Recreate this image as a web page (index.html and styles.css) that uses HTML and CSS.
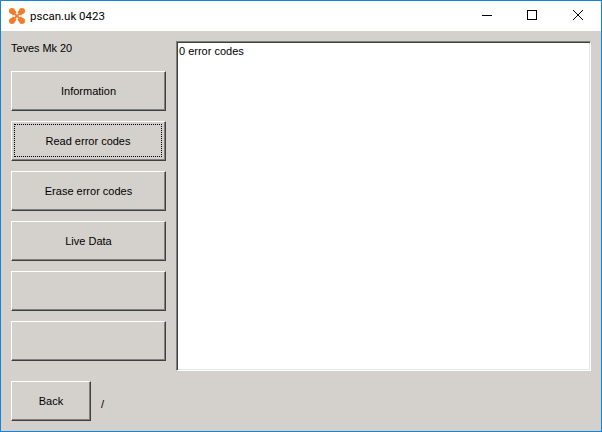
FILE: index.html
```html
<!DOCTYPE html>
<html lang="en">
<head>
<meta charset="utf-8">
<title>pscan.uk 0423</title>
<link rel="stylesheet" href="styles.css">
</head>
<body>
<div class="window">
  <header class="titlebar">
    <svg class="app-icon" width="16" height="16" viewBox="0 0 16 16">
      <path d="M3.5 3.5L12.5 12.5M12.5 3.5L3.5 12.5" fill="none" stroke="#f47b2a" stroke-width="5"/>
      <g fill="#f47b2a">
        <circle cx="3" cy="3" r="3"/><circle cx="13" cy="3" r="3"/>
        <circle cx="3" cy="13" r="3"/><circle cx="13" cy="13" r="3"/>
      </g>
      <g fill="#f6f1ec">
        <circle cx="8" cy="5.2" r="1.2"/><circle cx="8" cy="10.8" r="1.2"/>
        <circle cx="5.2" cy="8" r="1.2"/><circle cx="10.8" cy="8" r="1.2"/>
      </g>
    </svg>
    <span class="title">pscan.uk 0423</span>
    <div class="controls">
      <button class="control minimize" aria-label="Minimize"><svg width="10" height="10" viewBox="0 0 10 10"><path d="M0 5.5H10" stroke="#000" fill="none"/></svg></button>
      <button class="control" aria-label="Maximize"><svg width="10" height="10" viewBox="0 0 10 10"><rect x=".5" y=".5" width="9" height="9" stroke="#000" fill="none"/></svg></button>
      <button class="control" aria-label="Close"><svg width="10" height="10" viewBox="0 0 10 10"><path d="M0 0L10 10M10 0L0 10" stroke="#000" stroke-width="1" fill="none"/></svg></button>
    </div>
  </header>
  <main class="client">
    <div class="top">
      <aside class="sidebar">
        <div class="device">Teves Mk 20</div>
        <button class="btn">Information</button>
        <button class="btn focused"><span class="focus-ring">Read error codes</span></button>
        <button class="btn">Erase error codes</button>
        <button class="btn">Live Data</button>
        <button class="btn"></button>
        <button class="btn"></button>
      </aside>
      <div class="output">0 error codes</div>
    </div>
    <div class="bottom">
      <button class="btn back">Back</button>
      <span class="status">/</span>
    </div>
  </main>
</div>
</body>
</html>
```
FILE: styles.css
```css
* { box-sizing: border-box; }
html, body { margin: 0; padding: 0; }
body { width: 602px; height: 432px; overflow: hidden; font-family: "Liberation Sans", Arial, sans-serif; font-size: 11px; color: #000; }
.window { width: 602px; height: 432px; display: flex; flex-direction: column; border: 1px solid #1883d7; background: #d4d0cb; }
.titlebar { height: 30px; background: #fff; display: flex; align-items: center; padding-left: 8px; flex: none; }
.app-icon { flex: none; }
.title { margin-left: 5px; font-family: Roboto, sans-serif; font-size: 11.5px; color: #000; }
.controls { margin-left: auto; display: flex; height: 100%; }
.control { width: 46px; height: 30px; padding: 0 0 2px; border: 0; background: transparent; display: flex; align-items: center; justify-content: center; }
.minimize { width: 44px; }
.client { flex: 1; padding: 10px 10px 0; display: flex; flex-direction: column; gap: 10px; }
.top { display: flex; gap: 10px; height: 330px; }
.sidebar { width: 155px; flex: none; display: flex; flex-direction: column; gap: 10px; }
.device { height: 20px; line-height: 14px; font-size: 10.9px; }
.btn { width: 155px; height: 40px; padding: 0; font: 11px "Liberation Sans", Arial, sans-serif; color: #000; background: #d4d0cb; border: 1px solid; border-color: #fff #404040 #404040 #fff; box-shadow: inset -1px -1px 0 #808080; display: flex; align-items: center; justify-content: center; }
.focused { padding: 2px 3px 3px 2px; }
.focus-ring { display: flex; width: 100%; height: 100%; align-items: center; justify-content: center; border: 1px dotted #000; }
.output { width: 415px; height: 330px; background: #fff; border: 1px solid; border-color: #808080 #fff #fff #808080; box-shadow: inset 1px 1px 0 #404040, inset -1px -1px 0 #e8e6e2; padding: 2px; font-size: 11px; line-height: 14px; }
.bottom { display: flex; align-items: center; gap: 10px; }
.back { width: 80px; }
.status { font-size: 11px; padding-top: 6px; }
```
